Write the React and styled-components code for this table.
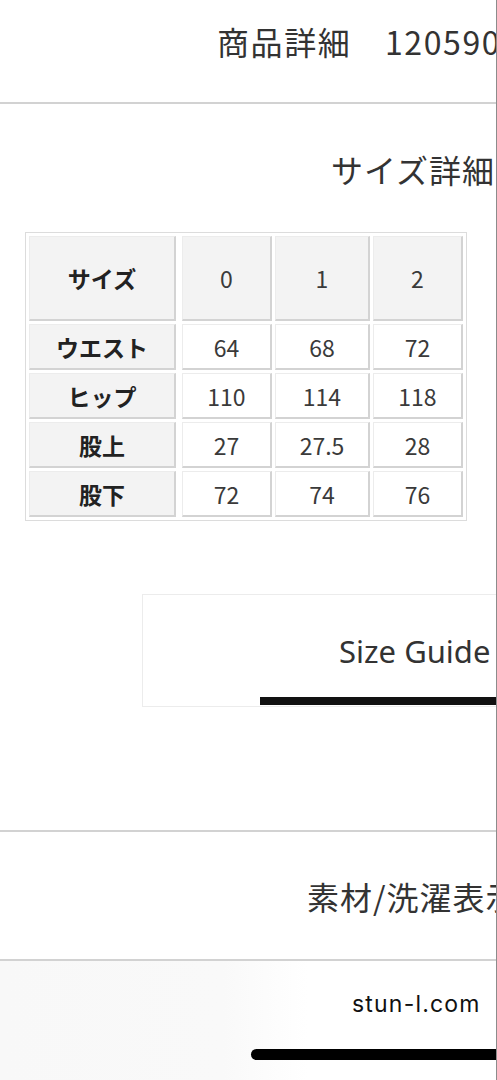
import React from "react";
import styled, { createGlobalStyle } from "styled-components";

const GlobalStyle = createGlobalStyle`
  html, body { margin: 0; padding: 0; background: #fff; }
  body { font-family: "Noto Sans CJK JP", "Noto Sans", sans-serif; }
`;

const Page = styled.div`
  width: 497px;
  height: 1080px;
  overflow: hidden;
  box-sizing: border-box;
  border-right: 1px solid #8c8c8c;
  display: flex;
  flex-direction: column;
  background: #fff;
`;

const HeaderBar = styled.header`
  height: 104px;
  flex: none;
  box-sizing: border-box;
  padding: 17px 0 0 217px;
  border-bottom: 2px solid #d2d2d2;
  white-space: nowrap;
`;

const Title = styled.h1`
  margin: 0;
  font-size: 32px;
  line-height: 48px;
  font-weight: 400;
  letter-spacing: 1.6px;
  color: #333;
`;

const SizeSection = styled.section`
  padding-top: 41px;
  display: flex;
  flex-direction: column;
  white-space: nowrap;
`;

const SectionTitle = styled.h2`
  margin: 0;
  padding-left: ${(p) => p.$indent}px;
  font-size: 32px;
  line-height: 48px;
  font-weight: 400;
  letter-spacing: 1px;
  color: #333;
`;

const Table = styled.div`
  margin: 39px 0 0 25px;
  width: max-content;
  padding: 3px;
  border: 1px solid #dcdcdc;
  display: grid;
  grid-template-columns: 150px 90px 95px 90px;
  grid-template-rows: 85px repeat(4, 46px);
  gap: 3px;
  background: #fff;
`;

const Cell = styled.div`
  box-sizing: border-box;
  width: ${(p) => (p.$label ? "147px" : "auto")};
  display: flex;
  align-items: center;
  justify-content: center;
  background: ${(p) => (p.$shade ? "#f3f3f3" : "#fff")};
  border-style: solid;
  border-width: 1px 2px 2px 1px;
  border-color: #ececec #d3d3d3 #d3d3d3 #ececec;
  font-size: ${(p) => (p.$label ? "23px" : "23px")};
  font-weight: ${(p) => (p.$label ? 700 : 400)};
  color: ${(p) => (p.$label ? "#222" : "#3a3a3a")};
`;

const GuideBox = styled.div`
  position: relative;
  margin: 73px 0 0 142px;
  height: 113px;
  width: 420px;
  box-sizing: border-box;
  border: 1px solid #ececec;
  display: flex;
  align-items: center;
  padding-left: 196px;
  font-family: "Noto Sans", sans-serif;
  font-size: 31px;
  color: #333;
`;

const GuideBar = styled.span`
  position: absolute;
  left: 117px;
  right: 0;
  bottom: 1px;
  height: 8px;
  background: #111;
`;

const MaterialSection = styled.section`
  margin-top: 123px;
  height: 131px;
  flex: none;
  box-sizing: border-box;
  border-top: 2px solid #d2d2d2;
  border-bottom: 2px solid #d2d2d2;
  display: flex;
  align-items: center;
  white-space: nowrap;
`;

const Footer = styled.footer`
  flex: 1;
  background: linear-gradient(90deg, #f8f8f8 0%, #f9f9f9 45%, #fff 62%);
  display: flex;
  flex-direction: column;
`;

const Url = styled.div`
  margin: 28px 0 0 352px;
  font-family: "Inter", "Noto Sans", sans-serif;
  font-size: 23px;
  line-height: 30px;
  letter-spacing: 1.2px;
  color: #111;
`;

const HomeIndicator = styled.div`
  margin: 30px 0 0 251px;
  height: 11px;
  width: 300px;
  border-radius: 6px;
  background: #000;
`;

const headers = ["0", "1", "2"];
const rows = [
  ["ウエスト", "64", "68", "72"],
  ["ヒップ", "110", "114", "118"],
  ["股上", "27", "27.5", "28"],
  ["股下", "72", "74", "76"],
];

export default function App() {
  return (
    <>
      <GlobalStyle />
      <Page>
        <HeaderBar>
          <Title>商品詳細　1205901</Title>
        </HeaderBar>
        <SizeSection>
          <SectionTitle $indent={331}>サイズ詳細</SectionTitle>
          <Table>
            <Cell $label $shade>サイズ</Cell>
            {headers.map((h) => (
              <Cell key={h} $shade>{h}</Cell>
            ))}
            {rows.map((r) =>
              r.map((v, i) =>
                i === 0 ? (
                  <Cell key={v} $label $shade>{v}</Cell>
                ) : (
                  <Cell key={r[0] + i}>{v}</Cell>
                )
              )
            )}
          </Table>
          <GuideBox>
            Size Guide
            <GuideBar />
          </GuideBox>
        </SizeSection>
        <MaterialSection>
          <SectionTitle $indent={307}>素材/洗濯表示</SectionTitle>
        </MaterialSection>
        <Footer>
          <Url>stun-l.com</Url>
          <HomeIndicator />
        </Footer>
      </Page>
    </>
  );
}
